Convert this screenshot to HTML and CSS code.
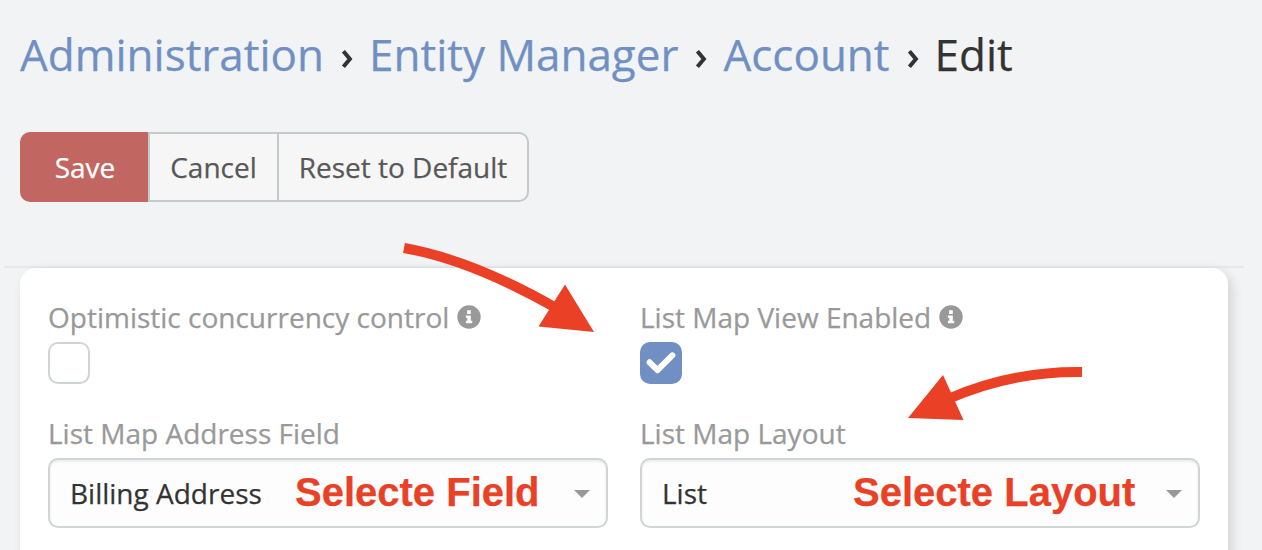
FILE: index.html
```html
<!DOCTYPE html>
<html lang="en">
<head>
<meta charset="utf-8">
<title>Administration › Entity Manager › Account › Edit</title>
<link rel="stylesheet" href="styles.css">
</head>
<body>
<main class="page">
  <h1 class="breadcrumbs"><a class="crumb">Administration</a><svg class="chevron" viewBox="0 0 12 20"><path d="M2.4 2.2 8.9 10 2.4 17.8"/></svg><a class="crumb">Entity Manager</a><svg class="chevron" viewBox="0 0 12 20"><path d="M2.4 2.2 8.9 10 2.4 17.8"/></svg><a class="crumb">Account</a><svg class="chevron" viewBox="0 0 12 20"><path d="M2.4 2.2 8.9 10 2.4 17.8"/></svg><span class="current">Edit</span></h1>
  <div class="buttons">
    <button class="btn btn-save">Save</button>
    <button class="btn btn-cancel">Cancel</button>
    <button class="btn btn-reset">Reset to Default</button>
  </div>
  <div class="divider"></div>
  <section class="panel">
    <div class="cell">
      <div class="label">Optimistic concurrency control
        <svg class="info" viewBox="0 0 24 24"><circle cx="12" cy="12" r="11.7"/><path d="M10.1 5.3h3.7v3.6h-3.7zM8.9 10.4h4.9v5.4h1.4v2.4H8.9v-2.4h1.4v-3H8.9z"/></svg>
      </div>
      <div class="checkbox"></div>
    </div>
    <div class="cell">
      <div class="label">List Map View Enabled
        <svg class="info" viewBox="0 0 24 24"><circle cx="12" cy="12" r="11.7"/><path d="M10.1 5.3h3.7v3.6h-3.7zM8.9 10.4h4.9v5.4h1.4v2.4H8.9v-2.4h1.4v-3H8.9z"/></svg>
      </div>
      <div class="checkbox checked"><svg class="check" viewBox="0 0 42 42"><path d="M9.6 20.3 17.5 28.2 32.3 13.4"/></svg></div>
    </div>
    <div class="cell">
      <div class="label">List Map Address Field</div>
      <div class="select"><span class="value">Billing Address</span><span class="note note-field">Selecte Field</span><span class="caret"></span></div>
    </div>
    <div class="cell">
      <div class="label">List Map Layout</div>
      <div class="select"><span class="value">List</span><span class="note note-layout">Selecte Layout</span><span class="caret"></span></div>
    </div>
  </section>
  <svg class="arrows" viewBox="0 0 1262 550">
    <path class="shaft" d="M404 248Q472 260 556 308M1082 372Q1012 371 948 399"/>
    <path class="head" d="M565 284.5 594 332 538.5 326.5zM943 375 963.5 420 908 418z"/>
  </svg>
</main>
</body>
</html>
```
FILE: styles.css
```css
* { box-sizing: border-box; }
body {
  margin: 0;
  background: #f1f3f5;
  color: #333;
  font: 28px/40px "Open Sans", sans-serif;
  -webkit-text-stroke: .25px currentColor;
}
.page {
  position: relative;
  height: 550px;
  overflow: hidden;
}
.breadcrumbs {
  display: flex;
  align-items: center;
  height: 132px;
  margin: 0;
  padding: 0 20px 24px;
  font-size: 44px;
  line-height: 60px;
  font-weight: 400;
  white-space: nowrap;
}
.crumb { color: #7090c3; }
.chevron {
  width: 12px;
  height: 20px;
  margin: 9px 16px 0 17px;
  fill: none;
  stroke: #333;
  stroke-width: 4;
}
.buttons {
  display: flex;
  height: 70px;
  padding-left: 20px;
}
.btn {
  height: 70px;
  padding: 0;
  border: 2px solid #c0cbca;
  background: #f6f6f6;
  color: #585858;
  font: inherit;
}
.btn-save {
  width: 128px;
  padding-left: 2px;
  border: 0;
  border-radius: 10px 0 0 10px;
  background: #c16660;
  color: #fff;
}
.btn-cancel { width: 131px; }
.btn-reset {
  width: 252px;
  margin-left: -2px;
  border-radius: 0 10px 10px 0;
}
.divider {
  height: 2px;
  margin: 64px 18px 0 4px;
  background: #e5e9ea;
}
.panel {
  display: grid;
  grid-template-columns: 560px 560px;
  grid-template-rows: 116px 130px;
  column-gap: 32px;
  width: 1208px;
  height: 320px;
  margin-left: 20px;
  padding: 30px 28px;
  border-radius: 16px;
  background: #fff;
  box-shadow: 4px 4px 12px rgba(0, 0, 0, .13);
}
.label {
  display: flex;
  align-items: center;
  gap: 8px;
  height: 44px;
  padding-bottom: 6px;
  color: #999;
}
.info {
  width: 24px;
  height: 24px;
}
.info circle { fill: #999; }
.info path { fill: #fff; }
.checkbox {
  width: 42px;
  height: 42px;
  border: 2px solid #d0d5d4;
  border-radius: 10px;
}
.checked {
  border: 0;
  background: #7090c3;
}
.check {
  display: block;
  fill: none;
  stroke: #fff;
  stroke-width: 6;
  stroke-linecap: round;
  stroke-linejoin: round;
}
.select {
  position: relative;
  display: flex;
  align-items: center;
  justify-content: space-between;
  height: 70px;
  padding: 0 16px 0 20px;
  border: 2px solid #d0d5d4;
  border-radius: 10px;
  background: #fdfdfd;
  box-shadow: inset 0 2px 3px rgba(0, 0, 0, .07);
}
.caret {
  margin-top: 2px;
  border: 8px solid transparent;
  border-top-color: #999;
  border-bottom: 0;
}
.note {
  position: absolute;
  top: 9px;
  color: #ea4025;
  font: bold 40px/46px "Liberation Sans", sans-serif;
  white-space: nowrap;
}
.note-field { left: 245px; }
.note-layout { left: 211px; }
.arrows {
  position: absolute;
  inset: 0;
  width: 1262px;
  height: 550px;
}
.shaft {
  fill: none;
  stroke: #ea4025;
  stroke-width: 10;
}
.head { fill: #ea4025; }
```
